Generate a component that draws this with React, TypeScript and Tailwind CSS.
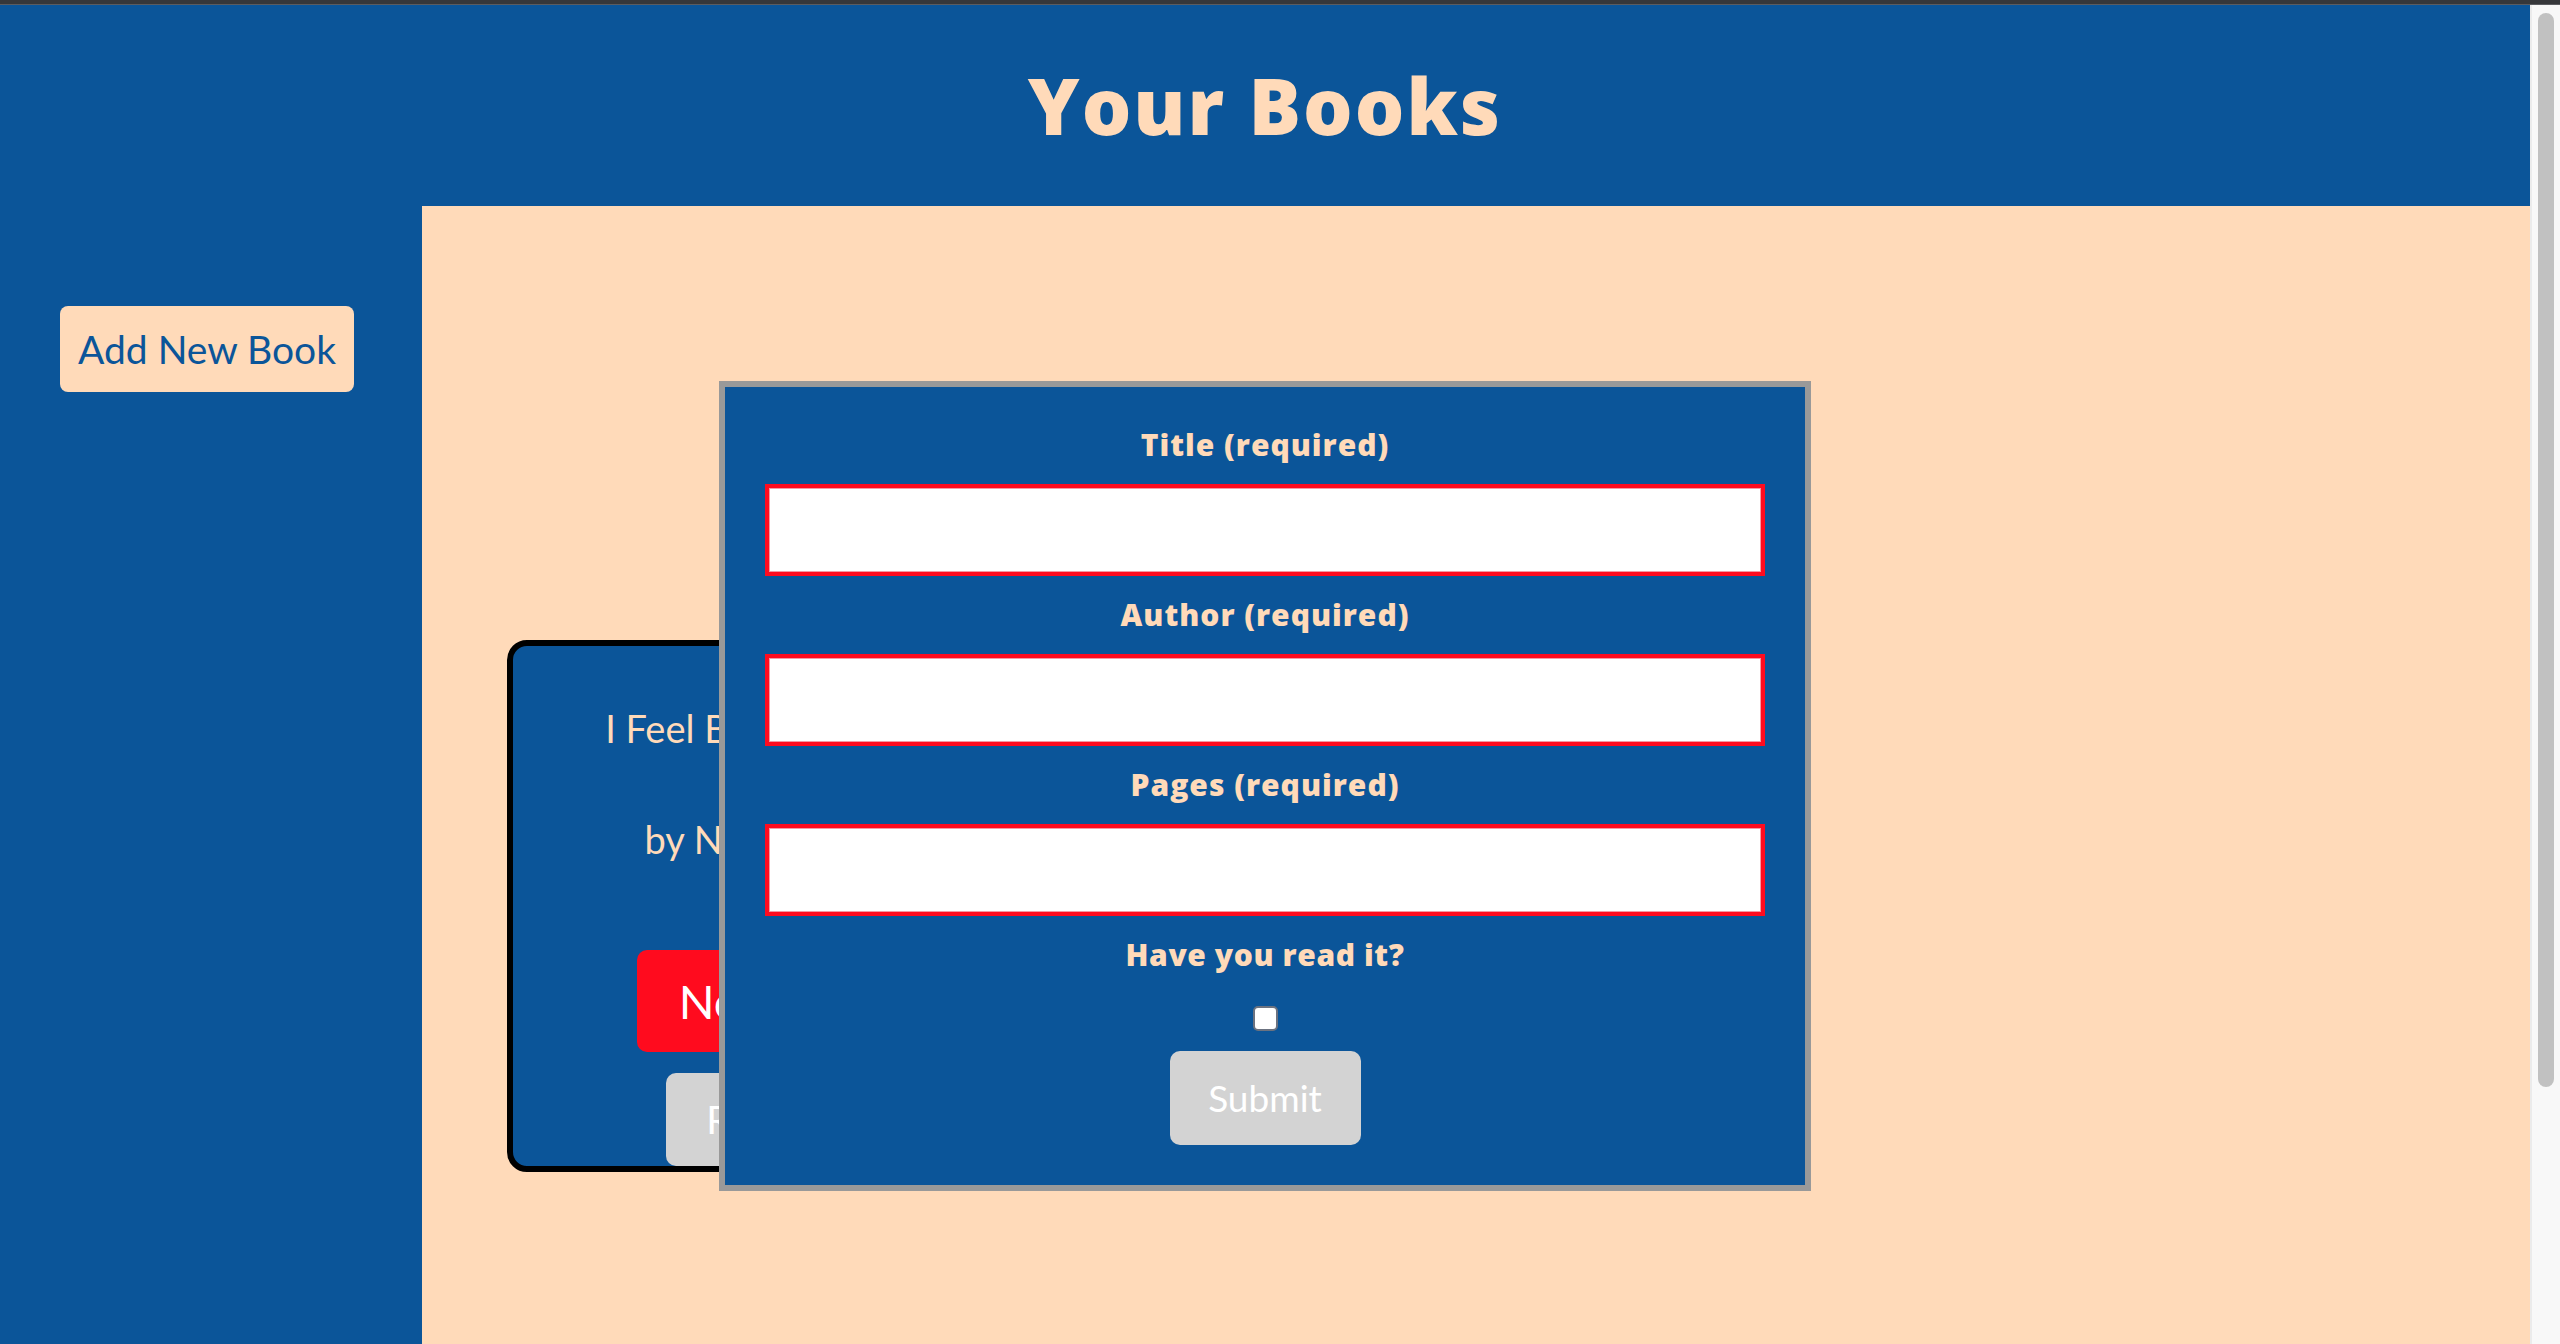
import React from 'react';

const blue = 'bg-[#0b5599]';

function BookCard() {
    return (
        <div className="w-[536px] h-[532px] border-[6px] border-black rounded-[20px] bg-[#0b5599] flex flex-col items-center pt-[59px] overflow-hidden">
            <p className="text-[38px] leading-[46px] text-[#ffdab9]">I Feel Bad About Me</p>
            <p className="mt-[65px] text-[38px] leading-[46px] text-[#ffdab9]">by Nora Ephron</p>
            <button className="mt-[88px] h-[102px] px-[42px] rounded-[10px] bg-[#ff0b1e] text-white text-[47px]">Not Read</button>
            <button className="mt-[21px] h-[93px] px-[40px] rounded-[10px] bg-[#d3d3d3] text-white text-[39px]">Remove</button>
        </div>
    );
}

function Field({ label }: { label: string }) {
    return (
        <>
            <label className="font-['Open_Sans',sans-serif] text-[30px] leading-[36px] font-extrabold tracking-[1px] text-[#ffdab9]">{label}</label>
            <input
                type="text"
                className="w-[1000px] h-[92px] bg-white border-4 border-[#ff0b1e] shadow-[inset_0_0_0_1px_#f59aa3] outline-none"
            />
        </>
    );
}

function NewBookDialog() {
    return (
        <div className="absolute top-[376px] inset-x-0 mx-auto w-[1092px] border-[6px] border-[#999999] bg-[#0b5599] p-[40px] flex flex-col items-center gap-[21px]">
            <Field label="Title (required)" />
            <Field label="Author (required)" />
            <Field label="Pages (required)" />
            <label className="font-['Open_Sans',sans-serif] text-[30px] leading-[36px] font-extrabold tracking-[0.6px] text-[#ffdab9]">Have you read it?</label>
            <input
                type="checkbox"
                className="mt-[12px] appearance-none w-[25px] h-[25px] bg-white border-2 border-[#6b7280] rounded-[5px]"
            />
            <button className="-mt-[1px] w-[191px] h-[94px] rounded-[10px] bg-[#d3d3d3] text-white text-[37px]">Submit</button>
        </div>
    );
}

export default function App() {
    return (
        <div className="h-screen w-full overflow-hidden flex flex-col font-['Lato','Noto_Sans',sans-serif]">
            <div className="h-[4px] bg-[#36373a] border-b border-[#5b5c60] box-content" />
            <div className="flex-1 flex flex-row min-h-0">
                <div className={`relative flex-1 flex flex-col ${blue}`}>
                    <header className="h-[201px] flex items-center justify-center">
                        <h1 className="font-['Open_Sans',sans-serif] text-[78px] leading-[91px] font-extrabold tracking-[2px] text-[#ffdab9]">Your Books</h1>
                    </header>
                    <div className="flex-1 flex flex-row">
                        <aside className="w-[422px] pl-[60px] pt-[100px]">
                            <button className="w-[294px] h-[86px] rounded-[8px] bg-[#ffdab9] text-[#0b5599] text-[39px]">Add New Book</button>
                        </aside>
                        <main className="flex-1 bg-[#ffdab9] pl-[85px] pt-[434px]">
                            <BookCard />
                        </main>
                    </div>
                    <NewBookDialog />
                </div>
                <div className="w-[30px] bg-[#f8f8f8] border-l-2 border-[#ebebeb] pl-[6px] pt-[8px]">
                    <div className="w-[16px] h-[1074px] rounded-full bg-[#c1c1c1]" />
                </div>
            </div>
        </div>
    );
}
